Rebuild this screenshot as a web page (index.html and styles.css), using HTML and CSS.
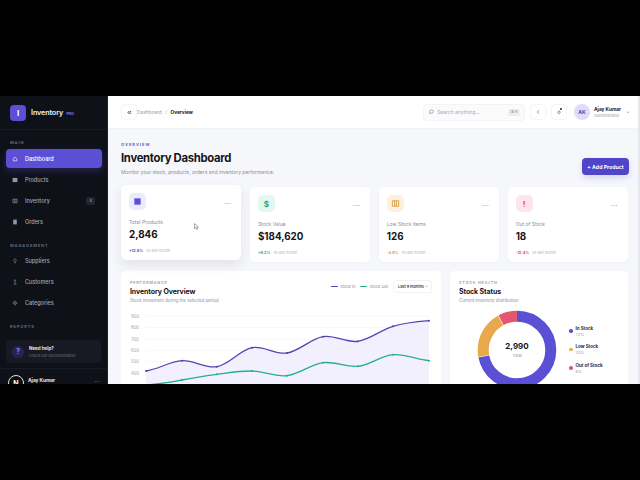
FILE: index.html
```html
<!DOCTYPE html>
<html lang="en">
<head>
  <meta charset="UTF-8" />
  <meta name="viewport" content="width=device-width, initial-scale=1.0" />
  <title>Inventory Dashboard</title>
  <link rel="stylesheet" href="styles.css">
</head>
<body>
  <div class="screen">
    <aside class="sidebar">
      <div class="brand">
        <div class="brand-logo">I</div>
        <span class="brand-name">Inventory</span>
        <span class="brand-tag">PRO</span>
      </div>

      <nav class="nav">
        <div class="nav-label nav-label-first">MAIN</div>
        <a class="nav-item active">
          <svg class="nav-icon" viewBox="0 0 10 10"><path d="M2 4.500 5 2l3 2.500V8H2z" fill="none" stroke="currentColor"/></svg>
          <span>Dashboard</span>
        </a>
        <a class="nav-item">
          <svg class="nav-icon" viewBox="0 0 10 10"><rect x="1" y="1.500" width="8" height="7" fill="currentColor"/></svg>
          <span>Products</span>
        </a>
        <a class="nav-item">
          <svg class="nav-icon" viewBox="0 0 10 10"><path d="M1.500 2h7v6h-7zM4 2v6M6.500 2v6" fill="none" stroke="currentColor"/></svg>
          <span>Inventory</span>
          <b class="nav-badge">8</b>
        </a>
        <a class="nav-item">
          <svg class="nav-icon" viewBox="0 0 10 10"><rect x="2" y="1" width="6" height="8" fill="currentColor"/></svg>
          <span>Orders</span>
        </a>

        <div class="nav-label">MANAGEMENT</div>
        <a class="nav-item">
          <svg class="nav-icon" viewBox="0 0 10 10"><path d="M5 1 7.500 4 5 7 2.500 4zM5 7v2.500" fill="none" stroke="currentColor"/></svg>
          <span>Suppliers</span>
        </a>
        <a class="nav-item">
          <svg class="nav-icon" viewBox="0 0 10 10"><path d="M3 2h4M5 2v6M2.500 8.500h5" fill="none" stroke="currentColor"/></svg>
          <span>Customers</span>
        </a>
        <a class="nav-item">
          <svg class="nav-icon" viewBox="0 0 10 10"><path d="M5 1.500 8.500 5 5 8.500 1.500 5zM1 5h8M5 1v8" fill="none" stroke="currentColor" stroke-width=".8"/></svg>
          <span>Categories</span>
        </a>

        <div class="nav-label">REPORTS</div>
      </nav>

      <div class="help">
        <div class="help-icon">?</div>
        <div>
          <div class="help-title">Need help?</div>
          <div class="help-text">Check our documentation</div>
        </div>
      </div>

      <div class="user">
        <span class="user-name">Ajay Kumar</span>
        <span class="user-more">...</span>
      </div>
      <div class="dev-badge">N</div>
    </aside>

    <div class="main">
      <header class="topbar">
        <div class="icon-btn">
          <svg viewBox="0 0 10 10" width="5" height="5"><path d="M4.500 2 2 5l2.500 3M8 2 5.500 5 8 8" fill="none" stroke="#2a2c3a" stroke-width="1.600"/></svg>
        </div>
        <div class="crumbs">
          <span>Dashboard</span>
          <span class="crumb-sep">/</span>
          <b>Overview</b>
        </div>
        <div class="search">
          <svg viewBox="0 0 10 10" width="6" height="6"><circle cx="5.800" cy="4.200" r="3" fill="none" stroke="#777a88"/><path d="M3.600 6.400 1.500 8.500" stroke="#777a88"/></svg>
          <span class="search-text">Search anything...</span>
          <kbd class="search-key">⌘ K</kbd>
        </div>
        <div class="icon-btn icon-btn-plain">
          <svg viewBox="0 0 10 10" width="6" height="6"><path d="M6.500 2 3.500 5l3 3" fill="none" stroke="#555866"/></svg>
        </div>
        <div class="icon-btn icon-btn-plain bell">
          <svg viewBox="0 0 10 10" width="6" height="6"><circle cx="5" cy="5.500" r="2" fill="none" stroke="#555866"/></svg>
          <i class="bell-dot"></i>
        </div>
        <div class="profile">
          <div class="profile-avatar">AK</div>
          <div class="profile-info">
            <b>Ajay Kumar</b>
            <span>Administrator</span>
          </div>
          <svg viewBox="0 0 10 10" width="4" height="4"><path d="M2 4l3 3 3-3" fill="none" stroke="#777a88" stroke-width="1.500"/></svg>
        </div>
      </header>

      <main class="content">
        <div class="page-head">
          <div>
            <div class="eyebrow">OVERVIEW</div>
            <h1>Inventory Dashboard</h1>
            <p>Monitor your stock, products, orders and inventory performance.</p>
          </div>
          <button class="add-btn">+ Add Product</button>
        </div>

        <div class="stats">
          <div class="stat stat-raised">
            <div class="stat-top">
              <div class="stat-icon purple"><svg viewBox="0 0 10 10" width="9" height="9"><rect x="1.500" y="1.500" width="7" height="7" fill="currentColor"/></svg></div>
              <span class="more">...</span>
            </div>
            <div class="stat-label">Total Products</div>
            <div class="stat-value">2,846</div>
            <div class="stat-foot"><b class="c-purple">+12.5%</b> vs last month</div>
          </div>
          <div class="stat">
            <div class="stat-top">
              <div class="stat-icon green"><b>$</b></div>
              <span class="more">...</span>
            </div>
            <div class="stat-label">Stock Value</div>
            <div class="stat-value">$184,620</div>
            <div class="stat-foot"><b class="c-green">+8.2%</b> vs last month</div>
          </div>
          <div class="stat">
            <div class="stat-top">
              <div class="stat-icon orange"><svg viewBox="0 0 10 10" width="9" height="9"><path d="M1.500 2h7v6h-7zM4 2v6M6 2v6" fill="none" stroke="currentColor"/></svg></div>
              <span class="more">...</span>
            </div>
            <div class="stat-label">Low Stock Items</div>
            <div class="stat-value">126</div>
            <div class="stat-foot"><b class="c-orange">-4.8%</b> vs last month</div>
          </div>
          <div class="stat">
            <div class="stat-top">
              <div class="stat-icon red"><b>!</b></div>
              <span class="more">...</span>
            </div>
            <div class="stat-label">Out of Stock</div>
            <div class="stat-value">18</div>
            <div class="stat-foot"><b class="c-red">-12.4%</b> vs last month</div>
          </div>
        </div>

        <div class="panels">
          <section class="panel">
            <div class="panel-head">
              <div>
                <div class="panel-kicker">PERFORMANCE</div>
                <h2>Inventory Overview</h2>
                <div class="panel-sub">Stock movement during the selected period</div>
              </div>
              <div class="chart-tools">
                <span class="key"><i class="key-line k-purple"></i>Stock In</span>
                <span class="key"><i class="key-line k-green"></i>Stock Out</span>
                <div class="range">Last 9 months <span>⌄</span></div>
              </div>
            </div>
            <svg class="chart" viewBox="0 0 300 90" width="300" height="90">
              <g stroke="#f1f2f6" stroke-width=".6">
                <path d="M16 7h283M16 18.500h283M16 30h283M16 41.300h283M16 52.700h283M16 64h283M16 75.500h283"/>
              </g>
              <g class="axis">
                <text x="1" y="8.500">900</text>
                <text x="1" y="20">800</text>
                <text x="1" y="31.500">700</text>
                <text x="1" y="43">600</text>
                <text x="1" y="54">500</text>
                <text x="1" y="65.500">400</text>
              </g>
              <path fill="#f2f0fc" d="M16 62C28 60.250 40 52.430 52 51.700C64 50.970 75 59.900 87 57.700C99 55.500 110 41.030 122 38.700C134 36.370 145 45.870 157 44C169 42.130 181 29.700 193 27.700C205 25.700 216 34.070 228 32.300C240 30.530 251 20.800 263 17.300C275 13.800 287 12.700 299 11.700V90H16Z"/>
              <path fill="none" stroke="#4f45b5" stroke-width="1.300" d="M16 62C28 60.250 40 52.430 52 51.700C64 50.970 75 59.900 87 57.700C99 55.500 110 41.030 122 38.700C134 36.370 145 45.870 157 44C169 42.130 181 29.700 193 27.700C205 25.700 216 34.070 228 32.300C240 30.530 251 20.800 263 17.300C275 13.800 287 12.700 299 11.700"/>
              <path fill="none" stroke="#23b08f" stroke-width="1.300" d="M16 76C28 75 40 73.500 52 71C64 68.500 75 66.830 87 65.300C99 63.770 110 61.760 122 62C134 62.240 145 68.110 157 66.700C169 65.290 181 55.300 193 53.700C205 52.100 216 58.660 228 57.300C240 55.940 251 46.650 263 45.700C275 44.750 287 50.700 299 51.700"/>
              <g fill="#4f45b5">
                <circle cx="16" cy="62" r="1"/><circle cx="52" cy="51.700" r="1"/><circle cx="87" cy="57.700" r="1"/><circle cx="122" cy="38.700" r="1"/><circle cx="157" cy="44" r="1"/><circle cx="193" cy="27.700" r="1"/><circle cx="228" cy="32.300" r="1"/><circle cx="263" cy="17.300" r="1"/><circle cx="299" cy="11.700" r="1"/>
              </g>
              <g fill="#23b08f">
                <circle cx="52" cy="71" r="1"/><circle cx="87" cy="65.300" r="1"/><circle cx="122" cy="62" r="1"/><circle cx="157" cy="66.700" r="1"/><circle cx="193" cy="53.700" r="1"/><circle cx="228" cy="57.300" r="1"/><circle cx="263" cy="45.700" r="1"/><circle cx="299" cy="51.700" r="1"/>
              </g>
            </svg>
          </section>

          <section class="panel">
            <div class="panel-kicker">STOCK HEALTH</div>
            <h2>Stock Status</h2>
            <div class="panel-sub">Current inventory distribution</div>
            <div class="donut-row">
              <div class="donut">
                <svg viewBox="0 0 80 80" width="80" height="80">
                  <g fill="none" stroke-width="11" transform="rotate(-90 40 40)">
                    <circle cx="40" cy="40" r="33.800" stroke="#5b4fd6" stroke-dasharray="152.500 212.400"/>
                    <circle cx="40" cy="40" r="33.800" stroke="#e8a84c" stroke-dasharray="42 212.400" stroke-dashoffset="-152.900"/>
                    <circle cx="40" cy="40" r="33.800" stroke="#e5566f" stroke-dasharray="16.600 212.400" stroke-dashoffset="-195.400"/>
                  </g>
                </svg>
                <div class="donut-center">
                  <b>2,990</b>
                  <span>Total</span>
                </div>
              </div>
              <div class="donut-legend">
                <div class="legend-item"><i class="dot d-blue"></i><div><b>In Stock</b><span>72%</span></div></div>
                <div class="legend-item"><i class="dot d-orange"></i><div><b>Low Stock</b><span>20%</span></div></div>
                <div class="legend-item"><i class="dot d-red"></i><div><b>Out of Stock</b><span>8%</span></div></div>
              </div>
            </div>
          </section>
        </div>
      </main>

      <svg class="cursor" viewBox="0 0 10 14" width="5" height="7"><path d="M1 1v10l2.500-2 1.500 4 2-.8-1.500-3.800H9z" fill="#fff" stroke="#555" stroke-width="1"/></svg>
    </div>
  </div>
</body>
</html>
```

FILE: styles.css
```css
* {
  box-sizing: border-box;
}

body {
  margin: 0;
  height: 480px;
  background: #000;
  font-family: Inter, "Noto Sans", sans-serif;
  overflow: hidden;
}

.screen {
  display: flex;
  width: 640px;
  height: 288px;
  margin-top: 96px;
  overflow: hidden;
  background: #f6f7fb;
}

/* sidebar */
.sidebar {
  position: relative;
  display: flex;
  flex-direction: column;
  flex: 0 0 108px;
  background: #0f1119;
  border-right: 1px solid #20222c;
  color: #a9acb8;
  overflow: hidden;
}

.brand {
  display: flex;
  align-items: center;
  flex: 0 0 34px;
  padding: 0 10px;
  border-bottom: 1px solid #191b24;
}

.brand-logo {
  display: flex;
  align-items: center;
  justify-content: center;
  width: 16px;
  height: 16px;
  border-radius: 4px;
  background: #5b4fd6;
  color: #fff;
  font-size: 8px;
  font-weight: 700;
}

.brand-name {
  margin-left: 5px;
  color: #f2f2f6;
  font-size: 7.200px;
  font-weight: 600;
  letter-spacing: -0.100px;
}

.brand-tag {
  margin-left: 3px;
  margin-top: 1px;
  color: #7d72e6;
  font-size: 3.800px;
  font-weight: 700;
}

.nav {
  flex: 0 0 207px;
  padding: 0 5px 0 6px;
}

.nav-label {
  height: 11px;
  margin: 8.500px 0 1px 4px;
  color: #6d7080;
  font-size: 4px;
  font-weight: 600;
  letter-spacing: 0.900px;
  line-height: 11px;
}

.nav-label-first {
  margin-top: 7px;
}

.nav-item {
  display: flex;
  align-items: center;
  height: 19px;
  margin-bottom: 2px;
  padding: 0 7px 0 6px;
  border-radius: 4px;
  color: #a1a4b1;
  font-size: 5.500px;
  font-weight: 500;
}

.nav-item.active {
  background: #5b4fd6;
  color: #fff;
  box-shadow: 0 3px 7px rgba(91, 79, 214, 0.3);
}

.nav-icon {
  width: 6px;
  height: 6px;
  margin-right: 7px;
  color: #9295a3;
}

.active .nav-icon {
  color: #fff;
}

.nav-badge {
  margin-left: auto;
  padding: 1.500px 3px;
  border-radius: 2px;
  background: #23252f;
  color: #8f92a0;
  font-size: 4px;
  font-weight: 500;
}

.help {
  display: flex;
  align-items: center;
  gap: 5px;
  height: 23px;
  margin: 3px 6px 0;
  padding: 0 6px;
  border-radius: 4px;
  background: #181a23;
}

.help-icon {
  display: flex;
  align-items: center;
  justify-content: center;
  width: 12px;
  height: 12px;
  border-radius: 50%;
  background: #262354;
  color: #8d83f0;
  font-size: 7px;
  font-weight: 700;
}

.help-title {
  color: #e8e8ee;
  font-size: 4.500px;
  font-weight: 700;
}

.help-text {
  margin-top: 2px;
  color: #696c7b;
  font-size: 3.800px;
}

.user {
  display: flex;
  align-items: flex-start;
  justify-content: space-between;
  margin: 5px 0 0;
  padding: 8px 7px 0 28px;
  border-top: 1px solid #191b24;
  color: #e8e8ee;
  font-size: 4.800px;
  font-weight: 700;
}

.user-more {
  margin-top: -1px;
  color: #9295a3;
  font-weight: 500;
  font-size: 6px;
}

.dev-badge {
  position: absolute;
  left: 8px;
  top: 279px;
  display: flex;
  align-items: center;
  justify-content: center;
  width: 16px;
  height: 16px;
  border-radius: 50%;
  border: 1.500px solid #e4e4e8;
  background: #0c0c0e;
  color: #fff;
  font-size: 7px;
  font-weight: 700;
}

/* top bar */
.main {
  position: relative;
  flex: 1;
  min-width: 0;
  border-right: 2px solid #e6e7ec;
}

.topbar {
  display: flex;
  align-items: center;
  height: 33px;
  padding: 0 8px 0 13px;
  background: #fff;
  border-bottom: 1px solid #f1f2f6;
}

.icon-btn {
  display: flex;
  align-items: center;
  justify-content: center;
  width: 16px;
  height: 16px;
  border: 1px solid #f4f5f8;
  border-radius: 4px;
  background: #fff;
}

.icon-btn-plain {
  margin-left: 5px;
}

.crumbs {
  display: flex;
  gap: 3.500px;
  color: #9a9daa;
  font-size: 4.800px;
}

.crumbs b {
  color: #20222c;
  font-weight: 700;
}

.crumb-sep {
  color: #b7b9c3;
}

.search {
  display: flex;
  align-items: center;
  width: 102px;
  height: 17px;
  margin-left: auto;
  padding: 0 4px;
  border: 1px solid #f3f4f7;
  border-radius: 4px;
  background: #fbfbfd;
}

.search-text {
  margin-left: 3px;
  color: #a5a8b4;
  font-size: 5px;
}

.search-key {
  margin-left: auto;
  padding: 1.500px 2.500px;
  border-radius: 2px;
  background: #eceef2;
  color: #777a88;
  font-family: inherit;
  font-size: 3.500px;
}

.bell {
  position: relative;
}

.bell-dot {
  position: absolute;
  top: 3px;
  right: 4px;
  width: 2px;
  height: 2px;
  border-radius: 50%;
  background: #20222c;
}

.profile {
  display: flex;
  align-items: center;
  margin-left: 7px;
}

.profile-avatar {
  display: flex;
  align-items: center;
  justify-content: center;
  width: 16px;
  height: 16px;
  border-radius: 50%;
  background: #dfdcf8;
  color: #4f45b5;
  font-size: 5px;
  font-weight: 700;
}

.profile-info {
  display: flex;
  flex-direction: column;
  gap: 1.500px;
  width: 32px;
  margin-left: 4px;
  font-size: 4.800px;
}

.profile-info b {
  color: #20222c;
}

.profile-info span {
  color: #9a9daa;
  font-size: 4px;
}

/* page */
.content {
  padding: 12px 9px 0 13px;
}

.page-head {
  display: flex;
  align-items: flex-end;
  justify-content: space-between;
  height: 34px;
}

.eyebrow {
  color: #6a60c9;
  font-size: 4px;
  font-weight: 700;
  letter-spacing: 1px;
}

h1 {
  margin: 4px 0 3px;
  color: #14151c;
  font-size: 11.300px;
  font-weight: 700;
  letter-spacing: -0.300px;
  line-height: 15px;
}

.page-head p {
  margin: 0;
  color: #8b8e9b;
  font-size: 5px;
}

.add-btn {
  width: 47px;
  height: 17px;
  padding: 0;
  border: none;
  border-radius: 4px;
  background: #5044c9;
  color: #fff;
  font-family: inherit;
  font-size: 5.200px;
  font-weight: 700;
  box-shadow: 0 3px 6px rgba(80, 68, 201, 0.2);
}

.stats {
  display: grid;
  grid-template-columns: repeat(4, 1fr);
  gap: 8.500px;
  margin: 12px 1px 0 0;
}

.stat {
  height: 75px;
  padding: 8px;
  border-radius: 5px;
  background: #fff;
  box-shadow: 0 1px 3px rgba(30, 32, 60, 0.03);
}

.stat-raised {
  transform: translateY(-2px);
  box-shadow: 0 5px 12px rgba(30, 32, 60, 0.09);
}

.stat-top {
  display: flex;
  align-items: center;
  justify-content: space-between;
}

.stat-icon {
  display: flex;
  align-items: center;
  justify-content: center;
  width: 17px;
  height: 17px;
  border-radius: 5px;
  font-size: 8px;
}

.purple {
  background: #ecebfb;
  color: #5b4fd6;
}

.green {
  background: #e3f8f0;
  color: #1fa87f;
}

.orange {
  background: #fdf0df;
  color: #d99a3c;
}

.red {
  background: #fde6ea;
  color: #d9475f;
}

.more {
  margin-right: 2px;
  color: #8b8e9b;
  font-size: 7px;
  letter-spacing: 0.400px;
  line-height: 7px;
}

.stat-label {
  margin-top: 9px;
  color: #8b8e9b;
  font-size: 5px;
}

.stat-value {
  margin-top: 3px;
  color: #14151c;
  font-size: 9.800px;
  font-weight: 700;
  line-height: 14px;
}

.stat-foot {
  margin-top: 5.500px;
  color: #b0b2bd;
  font-size: 3.800px;
}

.stat-foot b {
  margin-right: 2px;
}

.c-purple {
  color: #4f45b5;
}

.c-green {
  color: #1fa87f;
}

.c-orange {
  color: #d99a3c;
}

.c-red {
  color: #d9475f;
}

.panels {
  display: grid;
  grid-template-columns: 320px 1fr;
  gap: 9px;
  margin: 9px 1px 0 0;
}

.panel {
  height: 140px;
  padding: 8.500px 9px 0;
  border-radius: 5px;
  background: #fff;
}

.panel-head {
  display: flex;
  justify-content: space-between;
}

.panel-kicker {
  color: #8b8e9b;
  font-size: 3.800px;
  font-weight: 500;
  letter-spacing: 0.800px;
}

h2 {
  margin: 2px 0 2px;
  color: #14151c;
  font-size: 7px;
  font-weight: 700;
  letter-spacing: -0.100px;
  line-height: 9px;
}

.panel-sub {
  color: #8b8e9b;
  font-size: 4.300px;
}

.chart-tools {
  display: flex;
  align-items: center;
  gap: 5px;
  height: 13px;
  white-space: nowrap;
}

.key {
  display: flex;
  align-items: center;
  gap: 2px;
  color: #8b8e9b;
  font-size: 4px;
}

.key-line {
  width: 7px;
  height: 1px;
  border-radius: 1px;
}

.k-purple {
  background: #4f45b5;
}

.k-green {
  background: #23b08f;
}

.range {
  display: flex;
  justify-content: space-between;
  align-items: center;
  width: 39px;
  height: 13px;
  padding: 0 3px 0 4px;
  border: 1px solid #f1f2f6;
  border-radius: 3px;
  color: #3c3e4a;
  font-size: 3.800px;
  font-weight: 600;
}

.range span {
  margin-top: -2px;
  color: #777a88;
}

.chart {
  display: block;
  margin-top: 6px;
}

.axis {
  fill: #9a9daa;
  font-size: 4.300px;
}

.donut-row {
  display: flex;
  align-items: flex-start;
  margin-top: 7px;
}

.donut {
  position: relative;
  flex: 0 0 80px;
  height: 80px;
  margin-left: 18px;
}

.donut svg {
  display: block;
}

.donut-center {
  position: absolute;
  inset: 0;
  display: flex;
  flex-direction: column;
  align-items: center;
  justify-content: center;
  gap: 2px;
}

.donut-center b {
  color: #14151c;
  font-size: 8px;
  line-height: 10px;
}

.donut-center span {
  color: #8b8e9b;
  font-size: 4px;
}

.donut-legend {
  display: flex;
  flex-direction: column;
  gap: 7.500px;
  margin: 16px 0 0 12px;
}

.legend-item {
  display: flex;
  align-items: center;
  gap: 3px;
}

.legend-item b {
  display: block;
  color: #2a2c3a;
  font-size: 4.500px;
}

.legend-item span {
  display: block;
  margin-top: 1px;
  color: #9a9daa;
  font-size: 4px;
}

.dot {
  width: 3.500px;
  height: 3.500px;
  border-radius: 50%;
}

.d-blue {
  background: #5b4fd6;
}

.d-orange {
  background: #e8a84c;
}

.d-red {
  background: #e5566f;
}

/* mouse pointer caught in the capture */
.cursor {
  position: absolute;
  left: 86px;
  top: 127px;
}
```
